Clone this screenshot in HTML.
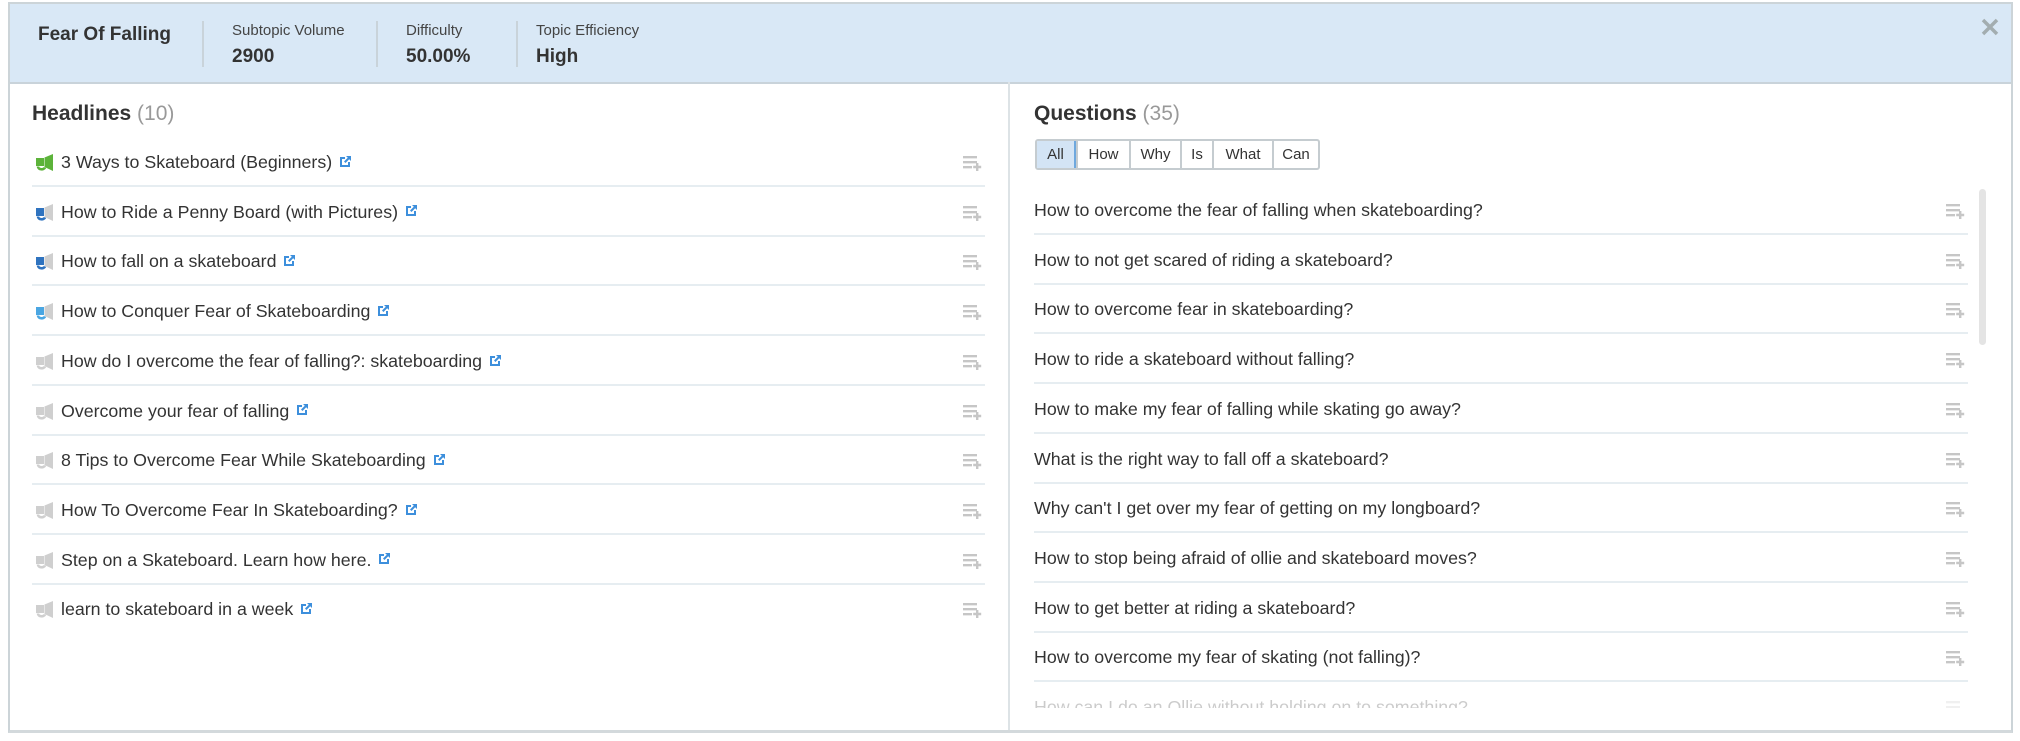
<!DOCTYPE html>
<html><head><meta charset="utf-8"><style>
*{margin:0;padding:0;box-sizing:border-box}
body{width:2020px;height:741px;background:#fff;font-family:"Liberation Sans",sans-serif;color:#333;position:relative;overflow:hidden}
.box{position:absolute;left:8px;top:2px;width:2005px;height:731px;border:2px solid #ccd4d8;border-bottom:3px solid #d3d9dc}
.hdr{position:absolute;left:0;top:0;right:0;height:80px;background:#d9e8f6;border-bottom:2px solid #c9d3da}
.t{position:absolute;font-size:19px;font-weight:bold;color:#333}
.lab{position:absolute;font-size:15px;color:#444}
.val{position:absolute;font-size:19px;font-weight:bold;color:#333}
.sep{position:absolute;top:17px;width:2px;height:46px;background:#c9d3da}
.x{position:absolute;left:1970px;top:13px}
.vdiv{position:absolute;left:1000px;top:82px;width:2px;height:648px;background:#dde3e6}
h2{position:absolute;font-size:21px;font-weight:bold;color:#333}
h2 span{font-weight:normal;color:#999}
.row{position:absolute;height:50px;font-size:17.8px;color:#333;border-bottom:2px solid #e6edf1;line-height:50px;white-space:nowrap}
.row svg.ic{position:absolute;left:3px;top:16px}
.row .tx{position:absolute;left:29px}
.ext{display:inline-block;vertical-align:middle;margin-left:7px;margin-top:-4px}
.add{position:absolute;right:2px;top:18px}
.q .tx{left:0}
.btns{position:absolute;left:1035px;top:139px;height:31px;display:flex;border:2px solid #c5ccd0;border-radius:3px;overflow:hidden}
.btns div{height:27px;line-height:27px;text-align:center;font-size:15px;color:#333;border-left:2px solid #c5ccd0}
.btns div:first-child{border-left:none;background:#d3e4f5;border:2px solid #6ea8de;margin:-2px 0 -2px -2px;height:31px;line-height:27px}
.sb{position:absolute;left:1979px;top:189px;width:7px;height:156px;border-radius:4px;background:#e4e4e4}
</style></head><body>
<div class="box">
<div class="hdr">
<div class="t" style="left:28px;top:20px">Fear Of Falling</div>
<div class="sep" style="left:192px"></div>
<div class="lab" style="left:222px;top:18px">Subtopic Volume</div>
<div class="val" style="left:222px;top:42px">2900</div>
<div class="sep" style="left:366px"></div>
<div class="lab" style="left:396px;top:18px">Difficulty</div>
<div class="val" style="left:396px;top:42px">50.00%</div>
<div class="sep" style="left:506px"></div>
<div class="lab" style="left:526px;top:18px">Topic Efficiency</div>
<div class="val" style="left:526px;top:42px">High</div>
<svg class="x" width="20" height="20" viewBox="0 0 20 20"><path d="M3 3 17 17M17 3 3 17" stroke="#a3adb0" stroke-width="3.5"/></svg>
</div>
</div>
<div class="vdiv" style="left:1008px"></div>
<h2 style="left:32px;top:102px">Headlines <span>(10)</span></h2>
<h2 style="left:1034px;top:102px">Questions <span>(35)</span></h2>
<div class="btns"><div style="width:41px">All</div><div style="width:53px">How</div><div style="width:51px">Why</div><div style="width:32px">Is</div><div style="width:60px">What</div><div style="width:46px">Can</div></div>
<div class="sb"></div>
<div id="L"></div><div id="R"></div>
<script>
function ic(a,b){return '<svg class="ic" width="20" height="19" viewBox="0 0 20 19"><path d="M1 5h8v8H1z" fill="'+a+'"/><path d="M9.5 4.5 18 1v17l-8.5-4z" fill="'+b+'"/><path d="M3 13.5c0 3.5 6 3.5 7 1" stroke="'+a+'" stroke-width="2.6" fill="none"/></svg>';}
var ext='<svg class="ext" width="13" height="13" viewBox="0 0 13 13"><path d="M1 2h5v2H3v6h6V7h2v5H1z" fill="#3d8fdc"/><path d="M7 1h5v5l-1.8-1.8L6.5 8 5 6.5l3.8-3.7z" fill="#3d8fdc"/></svg>';
var add='<svg class="add" width="20" height="16" viewBox="0 0 20 16"><path d="M0 1h14v2.4H0zM0 6h14v2.4H0zM0 11h9v2.4H0zM13 8h2.4v8H13zM10.2 10.8h8v2.4h-8z" fill="#c6c6c6"/></svg>';
var G='#5cb33a',B='#2f73bf',LB='#4aa6e2',g='#cfcfcf';
var H=[['3 Ways to Skateboard (Beginners)',G,G],['How to Ride a Penny Board (with Pictures)',B,g],['How to fall on a skateboard',B,g],['How to Conquer Fear of Skateboarding',LB,g],['How do I overcome the fear of falling?: skateboarding',g,g],['Overcome your fear of falling',g,g],['8 Tips to Overcome Fear While Skateboarding',g,g],['How To Overcome Fear In Skateboarding?',g,g],['Step on a Skateboard. Learn how here.',g,g],['learn to skateboard in a week',g,g]];
var s='';H.forEach(function(h,i){s+='<div class="row" style="left:32px;width:953px;top:'+(137+i*49.7)+'px;'+(i==9?'border-bottom:none':'')+'">'+ic(h[1],h[2])+'<span class="tx">'+h[0]+ext+'</span>'+add+'</div>';});
document.getElementById('L').innerHTML=s;
var Q=['How to overcome the fear of falling when skateboarding?','How to not get scared of riding a skateboard?','How to overcome fear in skateboarding?','How to ride a skateboard without falling?','How to make my fear of falling while skating go away?','What is the right way to fall off a skateboard?',"Why can't I get over my fear of getting on my longboard?",'How to stop being afraid of ollie and skateboard moves?','How to get better at riding a skateboard?','How to overcome my fear of skating (not falling)?','How can I do an Ollie without holding on to something?'];
s='';Q.forEach(function(q,i){s+='<div class="row q" style="left:1034px;width:934px;top:'+(185+i*49.7)+'px;'+(i==10?'opacity:.25;border-bottom:none;':'')+'"><span class="tx">'+q+'</span>'+add+'</div>';});
document.getElementById('R').innerHTML=s+'<div style="position:absolute;left:1012px;top:708px;width:990px;height:22px;background:#fff"></div>';
</script>
</body></html>
